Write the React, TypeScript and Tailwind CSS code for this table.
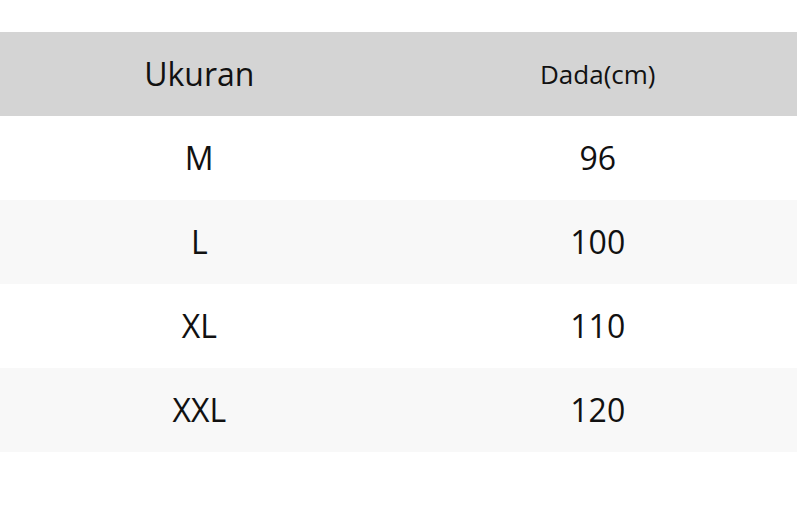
const rows = [
  { size: "M", chest: "96" },
  { size: "L", chest: "100" },
  { size: "XL", chest: "110" },
  { size: "XXL", chest: "120" },
];

export default function App() {
  return (
    <div
      className="w-[797px] h-[528px] bg-white pt-8 text-[#111]"
      style={{ fontFamily: '"Open Sans", sans-serif' }}
    >
      <div className="grid grid-cols-2 h-[84px] bg-[#d4d4d4] items-center text-center">
        <div className="text-[32px]">Ukuran</div>
        <div className="text-[26px]">Dada(cm)</div>
      </div>
      {rows.map((r, i) => (
        <div
          key={r.size}
          className={
            "grid grid-cols-2 h-[84px] items-center text-center text-[32px] " +
            (i % 2 === 1 ? "bg-[#f8f8f8]" : "bg-white")
          }
        >
          <div>{r.size}</div>
          <div>{r.chest}</div>
        </div>
      ))}
    </div>
  );
}
